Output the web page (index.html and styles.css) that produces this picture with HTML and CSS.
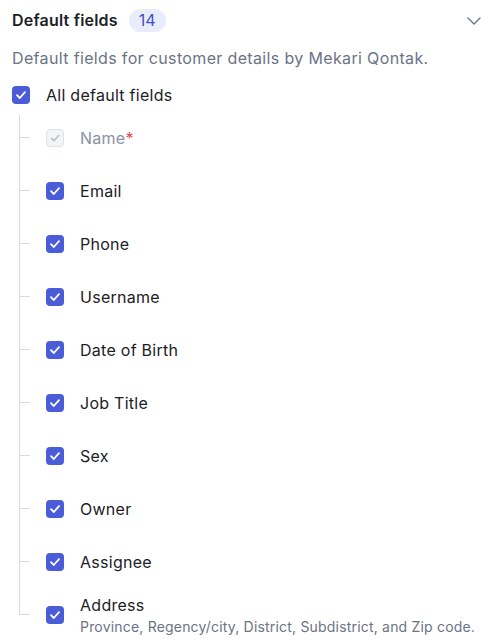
FILE: index.html
```html
<!DOCTYPE html>
<html lang="en">
<head>
<meta charset="utf-8">
<title>Default fields</title>
<link rel="stylesheet" href="styles.css">
</head>
<body>
<section class="panel">
  <header class="panel-header">
    <h2 class="title">Default fields</h2>
    <span class="badge">14</span>
    <svg class="chevron" width="14" height="8" viewBox="0 0 14 8" aria-hidden="true"><path d="M1 1 L7 7 L13 1" fill="none" stroke="#6b7280" stroke-width="1.4" stroke-linecap="round" stroke-linejoin="round"/></svg>
  </header>
  <p class="desc">Default fields for customer details by Mekari Qontak.</p>
  <div class="parent-row">
    <span class="cb"><svg viewBox="0 0 18 18"><path d="M5 9.2 L7.8 12 L13 6.2" fill="none" stroke="#fff" stroke-width="1.8" stroke-linecap="round" stroke-linejoin="round"/></svg></span>
    <span class="label">All default fields</span>
  </div>
  <ul class="tree">
    <li class="item">
      <span class="branch"><span class="b-top"></span><span class="b-bot"></span></span>
      <span class="cb cb-disabled"><svg viewBox="0 0 18 18"><path d="M5 9.2 L7.8 12 L13 6.2" fill="none" stroke="#b4bac6" stroke-width="1.6" stroke-linecap="round" stroke-linejoin="round"/></svg></span>
      <span class="label label-disabled">Name<span class="req">*</span></span>
    </li>
    <li class="item">
      <span class="branch"><span class="b-top"></span><span class="b-bot"></span></span>
      <span class="cb"><svg viewBox="0 0 18 18"><path d="M5 9.2 L7.8 12 L13 6.2" fill="none" stroke="#fff" stroke-width="1.8" stroke-linecap="round" stroke-linejoin="round"/></svg></span>
      <span class="label">Email</span>
    </li>
    <li class="item">
      <span class="branch"><span class="b-top"></span><span class="b-bot"></span></span>
      <span class="cb"><svg viewBox="0 0 18 18"><path d="M5 9.2 L7.8 12 L13 6.2" fill="none" stroke="#fff" stroke-width="1.8" stroke-linecap="round" stroke-linejoin="round"/></svg></span>
      <span class="label">Phone</span>
    </li>
    <li class="item">
      <span class="branch"><span class="b-top"></span><span class="b-bot"></span></span>
      <span class="cb"><svg viewBox="0 0 18 18"><path d="M5 9.2 L7.8 12 L13 6.2" fill="none" stroke="#fff" stroke-width="1.8" stroke-linecap="round" stroke-linejoin="round"/></svg></span>
      <span class="label">Username</span>
    </li>
    <li class="item">
      <span class="branch"><span class="b-top"></span><span class="b-bot"></span></span>
      <span class="cb"><svg viewBox="0 0 18 18"><path d="M5 9.2 L7.8 12 L13 6.2" fill="none" stroke="#fff" stroke-width="1.8" stroke-linecap="round" stroke-linejoin="round"/></svg></span>
      <span class="label">Date of Birth</span>
    </li>
    <li class="item">
      <span class="branch"><span class="b-top"></span><span class="b-bot"></span></span>
      <span class="cb"><svg viewBox="0 0 18 18"><path d="M5 9.2 L7.8 12 L13 6.2" fill="none" stroke="#fff" stroke-width="1.8" stroke-linecap="round" stroke-linejoin="round"/></svg></span>
      <span class="label">Job Title</span>
    </li>
    <li class="item">
      <span class="branch"><span class="b-top"></span><span class="b-bot"></span></span>
      <span class="cb"><svg viewBox="0 0 18 18"><path d="M5 9.2 L7.8 12 L13 6.2" fill="none" stroke="#fff" stroke-width="1.8" stroke-linecap="round" stroke-linejoin="round"/></svg></span>
      <span class="label">Sex</span>
    </li>
    <li class="item">
      <span class="branch"><span class="b-top"></span><span class="b-bot"></span></span>
      <span class="cb"><svg viewBox="0 0 18 18"><path d="M5 9.2 L7.8 12 L13 6.2" fill="none" stroke="#fff" stroke-width="1.8" stroke-linecap="round" stroke-linejoin="round"/></svg></span>
      <span class="label">Owner</span>
    </li>
    <li class="item">
      <span class="branch"><span class="b-top"></span><span class="b-bot"></span></span>
      <span class="cb"><svg viewBox="0 0 18 18"><path d="M5 9.2 L7.8 12 L13 6.2" fill="none" stroke="#fff" stroke-width="1.8" stroke-linecap="round" stroke-linejoin="round"/></svg></span>
      <span class="label">Assignee</span>
    </li>
    <li class="item">
      <span class="branch"><span class="b-top"></span><span class="b-bot"></span></span>
      <span class="cb"><svg viewBox="0 0 18 18"><path d="M5 9.2 L7.8 12 L13 6.2" fill="none" stroke="#fff" stroke-width="1.8" stroke-linecap="round" stroke-linejoin="round"/></svg></span>
      <span class="text-block">
        <span class="label">Address</span>
        <span class="sub">Province, Regency/city, District, Subdistrict, and Zip code.</span>
      </span>
    </li>
  </ul>
</section>
</body>
</html>
```

FILE: styles.css
```css
* { box-sizing: border-box; }
html, body { margin: 0; padding: 0; background: #fff; }
body {
  font-family: Inter, "Noto Sans", "Liberation Sans", sans-serif;
  color: #1d2127;
}
.panel {
  padding: 9px 10px 0 12px;
}
.panel-header {
  display: flex;
  align-items: center;
  height: 23px;
}
.title {
  margin: 0;
  font-size: 16px;
  font-weight: 600;
  line-height: 23px;
  letter-spacing: 0.2px;
  color: #1d2127;
}
.badge {
  margin-left: 11px;
  height: 23px;
  min-width: 37px;
  padding: 0 10px;
  border-radius: 12px;
  background: #e9ecfb;
  color: #3f51c6;
  font-size: 16px;
  line-height: 23px;
  text-align: center;
}
.chevron {
  margin-left: auto;
  display: block;
}
.desc {
  margin: 15px 0 0;
  font-size: 16px;
  line-height: 22px;
  letter-spacing: 0.35px;
  color: #6b7386;
}
.parent-row {
  margin-top: 14px;
  display: flex;
  align-items: center;
  gap: 16px;
  height: 24px;
}
.cb {
  flex: none;
  width: 18px;
  height: 18px;
  border-radius: 4px;
  background: #4a5cd8;
  display: flex;
  align-items: center;
  justify-content: center;
}
.cb svg { width: 18px; height: 18px; display: block; }
.cb-disabled {
  background: #f3f4f6;
  border: 1px solid #dfe2e7;
}
.cb-disabled svg { width: 16px; height: 16px; }
.label {
  font-size: 16px;
  line-height: 24px;
  letter-spacing: 0.27px;
  color: #1d2127;
}
.label-disabled { color: #8a92a6; }
.req { color: #e5484d; }
.tree {
  list-style: none;
  margin: 4px 0 0 7px;
  padding: 0;
}
.item {
  display: flex;
  align-items: center;
  min-height: 53px;
}
.branch {
  flex: none;
  align-self: stretch;
  width: 11px;
  margin-right: 16px;
  display: flex;
  flex-direction: column;
}
.b-top {
  flex: none;
  height: 27px;
  border-left: 1px solid #d5d9e0;
  border-bottom: 1px solid #d5d9e0;
}
.b-bot {
  flex: 1;
  border-left: 1px solid #d5d9e0;
}
.item:first-child .b-top {
  height: 23px;
  margin-top: 4px;
}
.item:last-child .b-bot { border-left: none; }
.item .cb { margin-right: 16px; }
.text-block {
  display: flex;
  flex-direction: column;
}
.sub {
  font-size: 14px;
  line-height: 20px;
  letter-spacing: 0.19px;
  color: #6b7386;
}
```
